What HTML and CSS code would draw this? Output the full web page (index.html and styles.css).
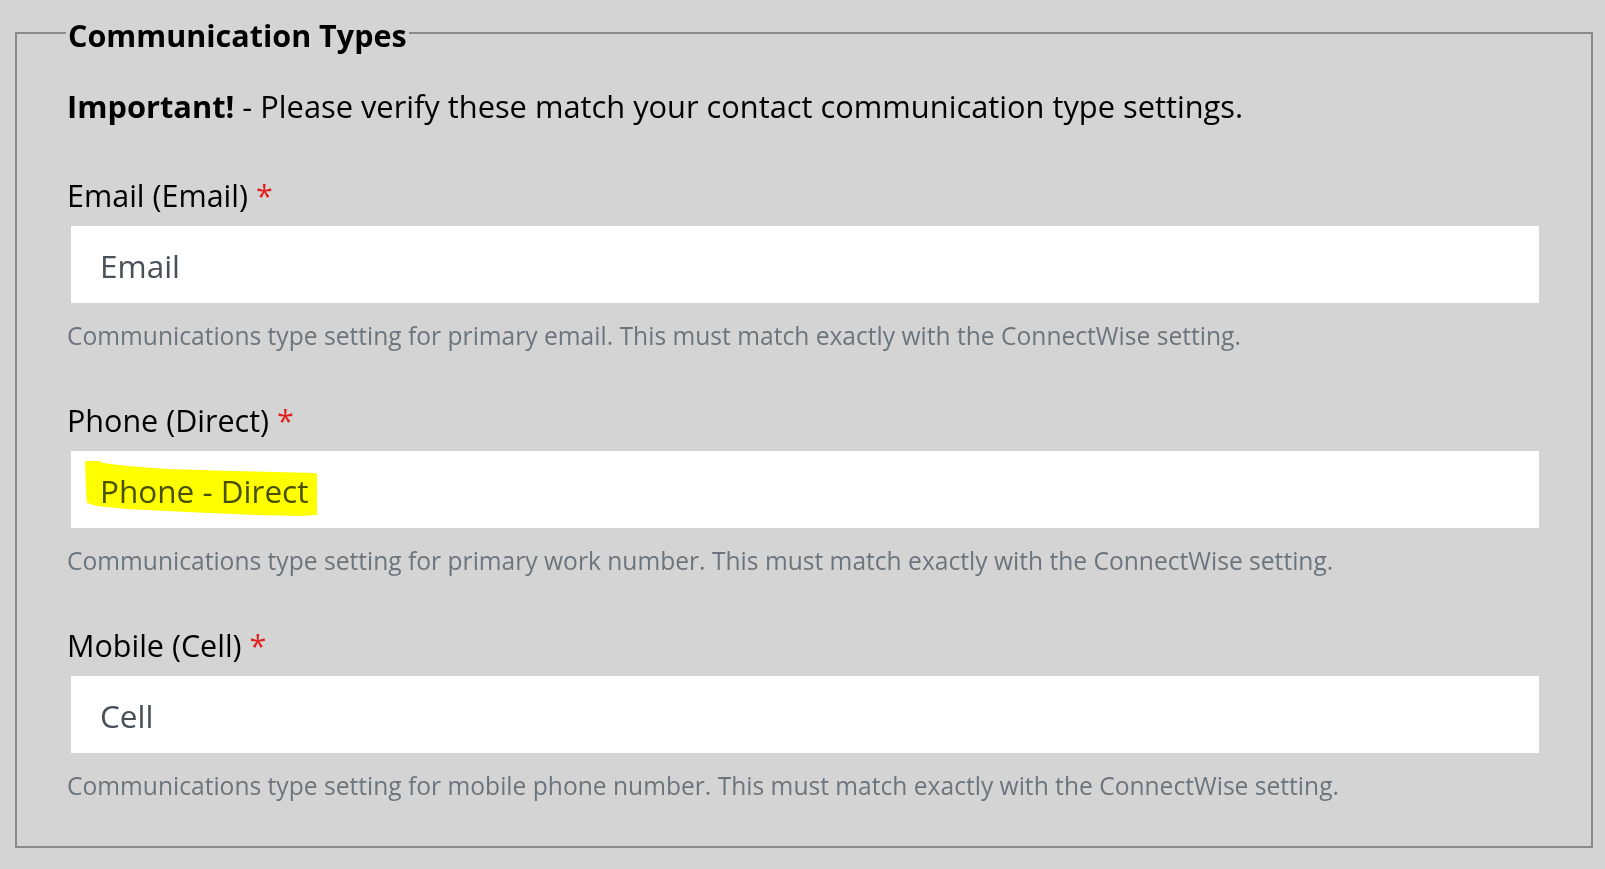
FILE: index.html
```html
<!DOCTYPE html>
<html lang="en">
<head>
    <meta charset="UTF-8">
    <meta name="viewport" content="width=device-width, initial-scale=1.0">
    <title>Communication Types</title>
    <link rel="stylesheet" href="styles.css">
</head>
<body>
    <!-- Communication type settings -->
    <fieldset class="settings-group">
        <legend>Communication Types</legend>
        <p class="notice"><strong>Important!</strong> - Please verify these match your contact communication type settings.</p>

        <div class="form-group">
            <label for="type-email">Email (Email) <span class="required">*</span></label>
            <input type="text" id="type-email" class="form-control" value="Email">
            <small class="help-text">Communications type setting for primary email. This must match exactly with the ConnectWise setting.</small>
        </div>

        <div class="form-group">
            <label for="type-phone">Phone (Direct) <span class="required">*</span></label>
            <div class="field-wrap">
                <input type="text" id="type-phone" class="form-control" value="Phone - Direct">
                <!-- marker annotation -->
                <svg class="marker" width="270" height="80" viewBox="0 0 270 80">
                    <polygon points="18,10 33,10 36,12 60,15 100,18 165,20 249,22 250,23 250,64 232,65 190,64 120,61 60,58 30,55 20,52 19,38"/>
                </svg>
            </div>
            <small class="help-text">Communications type setting for primary work number. This must match exactly with the ConnectWise setting.</small>
        </div>

        <div class="form-group">
            <label for="type-mobile">Mobile (Cell) <span class="required">*</span></label>
            <input type="text" id="type-mobile" class="form-control" value="Cell">
            <small class="help-text">Communications type setting for mobile phone number. This must match exactly with the ConnectWise setting.</small>
        </div>
    </fieldset>
</body>
</html>
```

FILE: styles.css
```css
/* General Styling */
body {
    font-family: 'Open Sans', sans-serif;
    margin: 0;
    padding: 0;
    background: #d4d4d4;
    color: #000;
}

/* Fieldset box */
.settings-group {
    margin: 9px 12px 0 15px;
    padding: 0 52px 0 50px;
    border: 2px solid #8a8a8a;
}

.settings-group legend {
    font-size: 30.5px;
    font-weight: bold;
    line-height: 44px;
    padding: 4px 2px 0;
    margin-left: -1px;
}

.notice {
    font-size: 30.8px;
    line-height: 48px;
    margin: 25px 0 41px;
}

/* Form groups */
.form-group {
    margin-bottom: 42px;
}

.form-group label {
    display: block;
    font-size: 30.5px;
    line-height: 48px;
    margin-bottom: 7px;
}

.required {
    color: #e0201f;
}

.form-control {
    display: block;
    box-sizing: border-box;
    width: calc(100% - 4px);
    height: 77px;
    margin-left: 4px;
    padding: 2px 29px 0;
    font-family: 'Open Sans', sans-serif;
    font-size: 31.5px;
    color: #495057;
    background: #fff;
    border: none;
    border-radius: 0;
    outline: none;
}

.field-wrap {
    position: relative;
}

.marker {
    position: absolute;
    top: 0;
    left: 0;
    pointer-events: none;
    mix-blend-mode: multiply;
    fill: #ffff00;
}

.help-text {
    display: block;
    margin-top: 15px;
    font-size: 24.6px;
    line-height: 36px;
    color: #6c757d;
}
```
